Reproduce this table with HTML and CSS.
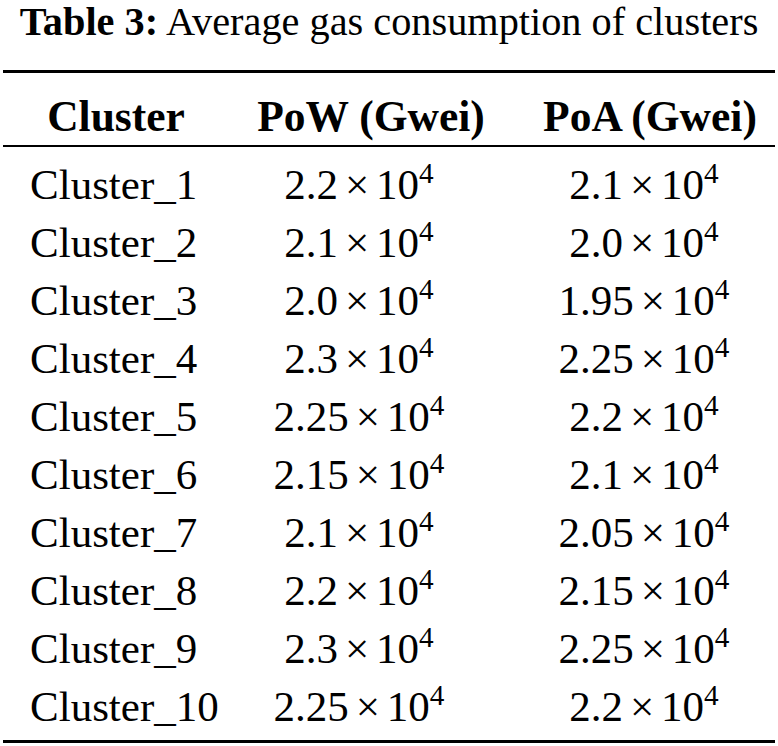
FILE: index.html
```html
<!DOCTYPE html>
<html>
<head>
<meta charset="utf-8">
<link rel="stylesheet" href="styles.css">
</head>
<body>
<div class="caption"><b>Table 3:</b> Average gas consumption of clusters</div>
<table class="tbl">
  <colgroup><col class="c1"><col class="c2"><col class="c3"></colgroup>
  <thead>
    <tr><th class="h1">Cluster</th><th class="h2">PoW (Gwei)</th><th class="h3">PoA (Gwei)</th></tr>
  </thead>
  <tbody>
    <tr><td class="d1">Cluster_1</td><td class="d2">2.2<span class="x">×</span>10<sup>4</sup></td><td class="d3">2.1<span class="x">×</span>10<sup>4</sup></td></tr>
    <tr><td class="d1">Cluster_2</td><td class="d2">2.1<span class="x">×</span>10<sup>4</sup></td><td class="d3">2.0<span class="x">×</span>10<sup>4</sup></td></tr>
    <tr><td class="d1">Cluster_3</td><td class="d2">2.0<span class="x">×</span>10<sup>4</sup></td><td class="d3">1.95<span class="x">×</span>10<sup>4</sup></td></tr>
    <tr><td class="d1">Cluster_4</td><td class="d2">2.3<span class="x">×</span>10<sup>4</sup></td><td class="d3">2.25<span class="x">×</span>10<sup>4</sup></td></tr>
    <tr><td class="d1">Cluster_5</td><td class="d2">2.25<span class="x">×</span>10<sup>4</sup></td><td class="d3">2.2<span class="x">×</span>10<sup>4</sup></td></tr>
    <tr><td class="d1">Cluster_6</td><td class="d2">2.15<span class="x">×</span>10<sup>4</sup></td><td class="d3">2.1<span class="x">×</span>10<sup>4</sup></td></tr>
    <tr><td class="d1">Cluster_7</td><td class="d2">2.1<span class="x">×</span>10<sup>4</sup></td><td class="d3">2.05<span class="x">×</span>10<sup>4</sup></td></tr>
    <tr><td class="d1">Cluster_8</td><td class="d2">2.2<span class="x">×</span>10<sup>4</sup></td><td class="d3">2.15<span class="x">×</span>10<sup>4</sup></td></tr>
    <tr><td class="d1">Cluster_9</td><td class="d2">2.3<span class="x">×</span>10<sup>4</sup></td><td class="d3">2.25<span class="x">×</span>10<sup>4</sup></td></tr>
    <tr><td class="d1">Cluster_10</td><td class="d2">2.25<span class="x">×</span>10<sup>4</sup></td><td class="d3">2.2<span class="x">×</span>10<sup>4</sup></td></tr>
  </tbody>
</table>
</body>
</html>
```
FILE: styles.css
```css
html, body {
  margin: 0;
  padding: 0;
  background: #ffffff;
  color: #000000;
  font-family: "Liberation Serif", "Times New Roman", serif;
}
.caption {
  font-size: 40.3px;
  line-height: 44px;
  text-align: center;
  white-space: nowrap;
  margin-bottom: 26px;
}
.tbl {
  margin-left: 3px;
  width: 772px;
  table-layout: fixed;
  border-collapse: collapse;
  font-size: 43px;
}
.c1 { width: 242px; }
.c2 { width: 252px; }
.c3 { width: 278px; }
.tbl thead tr {
  border-top: 3px solid #000;
  border-bottom: 2px solid #000;
}
.tbl tbody tr:last-child {
  border-bottom: 3px solid #000;
}
.tbl th {
  font-weight: bold;
  font-size: 43.5px;
  line-height: 58px;
  padding: 14px 0 0 0;
  text-align: center;
  white-space: nowrap;
}
.tbl td {
  line-height: 58px;
  padding: 0;
  white-space: nowrap;
}
.tbl tbody tr:first-child td { padding-top: 9px; }
.tbl tbody tr:last-child td { padding-bottom: 4px; }
.h1 { padding-right: 16px !important; }
.h3 { padding-left: 28px !important; }
.d1 { text-align: left; padding-left: 27px !important; }
.d2 { text-align: center; padding-right: 24px !important; }
.d3 { text-align: center; padding-left: 16px !important; }
.x { margin: 0 0.16em; }
sup {
  font-size: 0.68em;
  line-height: 0;
  vertical-align: 0.55em;
}
```
